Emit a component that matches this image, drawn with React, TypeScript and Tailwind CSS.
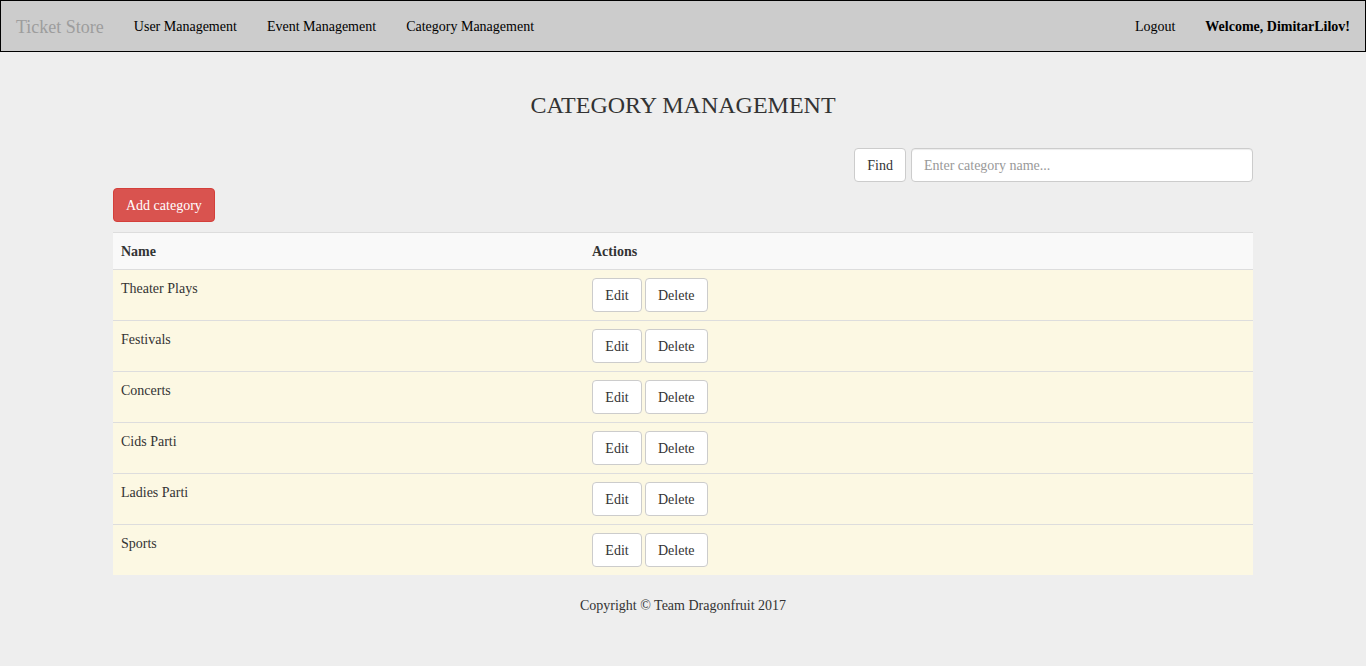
const categories = ['Theater Plays', 'Festivals', 'Concerts', 'Cids Parti', 'Ladies Parti', 'Sports']

function NavBar() {
  return (
    <nav className="flex h-[52px] items-center justify-between border border-black bg-[#cccccc] pt-[2px] text-[14px] leading-[20px]">
      <div className="flex items-center">
        <a className="px-[15px] text-[18px] leading-[20px] text-[#9d9d9d]">Ticket Store</a>
        <a className="px-[15px] text-black">User Management</a>
        <a className="px-[15px] text-black">Event Management</a>
        <a className="px-[15px] text-black">Category Management</a>
      </div>
      <div className="flex items-center">
        <a className="px-[15px] text-black">Logout</a>
        <span className="px-[15px] font-bold text-black">Welcome, DimitarLilov!</span>
      </div>
    </nav>
  )
}

export default function App() {
  return (
    <div
      className="min-h-[666px] bg-[#eeeeee] text-[14px] leading-[20px] text-[#333333]"
      style={{ fontFamily: '"Liberation Serif", "Times New Roman", serif' }}
    >
      <NavBar />

      <div className="mx-auto w-[1140px]">
        <h2 className="mt-[40px] text-center text-[24px] leading-[26px] text-[#333333]">CATEGORY MANAGEMENT</h2>

        <div className="mt-[30px] flex justify-end gap-[5px]">
          <button className="h-[34px] rounded-[4px] border border-[#cccccc] bg-white px-[12px] pt-[2px] text-[#333333]">
            Find
          </button>
          <input
            type="text"
            placeholder="Enter category name..."
            className="h-[34px] w-[342px] rounded-[4px] border border-[#cccccc] bg-white px-[12px] pt-[1px] text-[#555555] shadow-[inset_0_1px_1px_rgba(0,0,0,0.075)] outline-none placeholder:text-[#999999]"
          />
        </div>

        <button className="mt-[6px] h-[34px] rounded-[4px] border border-[#d43f3a] bg-[#d9534f] px-[12px] pt-[2px] text-white">
          Add category
        </button>

        <table className="mt-[10px] w-full border-collapse">
          <thead>
            <tr className="border-t border-[#dddddd] bg-[#f9f9f9]">
              <th className="w-[471px] px-[8px] pt-[9px] pb-[7px] text-left align-top font-bold">Name</th>
              <th className="px-[8px] pt-[9px] pb-[7px] text-left align-top font-bold">Actions</th>
            </tr>
          </thead>
          <tbody>
            {categories.map((name) => (
              <tr key={name} className="border-t border-[#dddddd] bg-[#fcf8e3]">
                <td className="px-[8px] pt-[9px] pb-[7px] align-top">{name}</td>
                <td className="p-[8px] align-top">
                  <div className="flex gap-[3px]">
                    <button className="h-[34px] w-[50px] rounded-[4px] border border-[#cccccc] bg-white pt-[2px] text-[#333333]">
                      Edit
                    </button>
                    <button className="h-[34px] rounded-[4px] border border-[#cccccc] bg-white px-[12px] pt-[2px] text-[#333333]">
                      Delete
                    </button>
                  </div>
                </td>
              </tr>
            ))}
          </tbody>
        </table>

        <footer className="mt-[21px] text-center">Copyright © Team Dragonfruit 2017</footer>
      </div>
    </div>
  )
}
